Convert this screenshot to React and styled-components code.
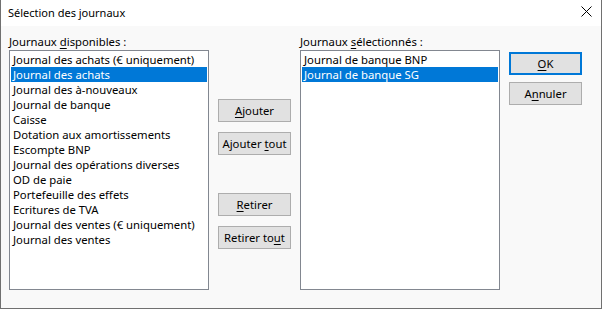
import React, { useState } from 'react';
import styled, { createGlobalStyle } from 'styled-components';

const GlobalStyle = createGlobalStyle`
    body {
        margin: 0;
        font-family: "Segoe UI", "Noto Sans", sans-serif;
        font-size: 11.3px;
        color: #000;
    }
`

const Window = styled.div`
    width: 602px;
    height: 309px;
    box-sizing: border-box;
    border: 1px solid #707070;
    border-top: none;
    background-color: #f9f9f9;
    display: flex;
    flex-direction: column;
`

const TitleBar = styled.div`
    height: 26px;
    background-color: #ffffff;
    display: flex;
    align-items: center;
    justify-content: space-between;
    padding: 0 9px 0 7px;
    flex-shrink: 0;
`

const Title = styled.span`
    font-size: 11px;
    padding-bottom: 1px;
`

const CloseIcon = styled.svg`
    width: 11px;
    height: 11px;
    margin-bottom: 3px;
`

const Body = styled.div`
    display: flex;
    padding: 0 8px;
`

const ListColumn = styled.div`
    width: 200px;
    display: flex;
    flex-direction: column;
`

const Label = styled.div`
    height: 24px;
    display: flex;
    align-items: flex-end;
    line-height: 15px;
    padding-bottom: 1px;
    box-sizing: border-box;
    white-space: nowrap;
`

const Mnemonic = styled.span`
    text-decoration: underline;
    text-underline-offset: 2px;
`

const ListBox = styled.ul`
    margin: 0;
    padding: 1px;
    list-style: none;
    height: 240px;
    box-sizing: border-box;
    border: 1px solid #828790;
    background-color: #ffffff;
`

const Item = styled.li`
    height: 15px;
    line-height: 15px;
    padding-left: 2px;
    white-space: nowrap;
    overflow: hidden;
    background-color: ${({ selected }) => (selected ? '#0078d7' : 'transparent')};
    color: ${({ selected }) => (selected ? '#ffffff' : '#000000')};
`

const MiddleColumn = styled.div`
    width: 91px;
    display: flex;
    flex-direction: column;
    align-items: center;
    padding-top: 73px;
    gap: 10px;
`

const SideColumn = styled.div`
    display: flex;
    flex-direction: column;
    gap: 7px;
    padding: 26px 0 0 9px;
`

const Button = styled.button`
    width: 73px;
    height: 23px;
    box-sizing: border-box;
    padding: 0;
    margin-top: ${({ spaced }) => (spaced ? '28px' : '0')};
    font-family: inherit;
    font-size: 11.3px;
    line-height: 15px;
    color: #000;
    background-color: #e1e1e1;
    border: ${({ primary }) => (primary ? '2px solid #0078d7' : '1px solid #adadad')};
    white-space: nowrap;
`

const disponibles = [
    'Journal des achats (€ uniquement)',
    'Journal des achats',
    'Journal des à-nouveaux',
    'Journal de banque',
    'Caisse',
    'Dotation aux amortissements',
    'Escompte BNP',
    'Journal des opérations diverses',
    'OD de paie',
    'Portefeuille des effets',
    'Ecritures de TVA',
    'Journal des ventes (€ uniquement)',
    'Journal des ventes',
]

const selectionnes = ['Journal de banque BNP', 'Journal de banque SG']

const App = () => {
    const [gauche, setGauche] = useState(1)
    const [droite, setDroite] = useState(1)

    return (
        <>
            <GlobalStyle />
            <Window>
                <TitleBar>
                    <Title>Sélection des journaux</Title>
                    <CloseIcon viewBox="0 0 11 11">
                        <path d="M0.5 0.5 L10.5 10.5 M10.5 0.5 L0.5 10.5" stroke="#000" strokeWidth="1" fill="none" />
                    </CloseIcon>
                </TitleBar>
                <Body>
                    <ListColumn>
                        <Label>Journaux&nbsp;<Mnemonic>d</Mnemonic>isponibles :</Label>
                        <ListBox>
                            {disponibles.map((nom, i) => (
                                <Item key={nom} selected={i === gauche} onClick={() => setGauche(i)}>{nom}</Item>
                            ))}
                        </ListBox>
                    </ListColumn>
                    <MiddleColumn>
                        <Button><Mnemonic>A</Mnemonic>jouter</Button>
                        <Button>Ajouter <Mnemonic>t</Mnemonic>out</Button>
                        <Button spaced><Mnemonic>R</Mnemonic>etirer</Button>
                        <Button>Retirer to<Mnemonic>u</Mnemonic>t</Button>
                    </MiddleColumn>
                    <ListColumn>
                        <Label>Journaux&nbsp;<Mnemonic>s</Mnemonic>électionnés :</Label>
                        <ListBox>
                            {selectionnes.map((nom, i) => (
                                <Item key={nom} selected={i === droite} onClick={() => setDroite(i)}>{nom}</Item>
                            ))}
                        </ListBox>
                    </ListColumn>
                    <SideColumn>
                        <Button primary><Mnemonic>O</Mnemonic>K</Button>
                        <Button>A<Mnemonic>n</Mnemonic>nuler</Button>
                    </SideColumn>
                </Body>
            </Window>
        </>
    )
}

export default App;
